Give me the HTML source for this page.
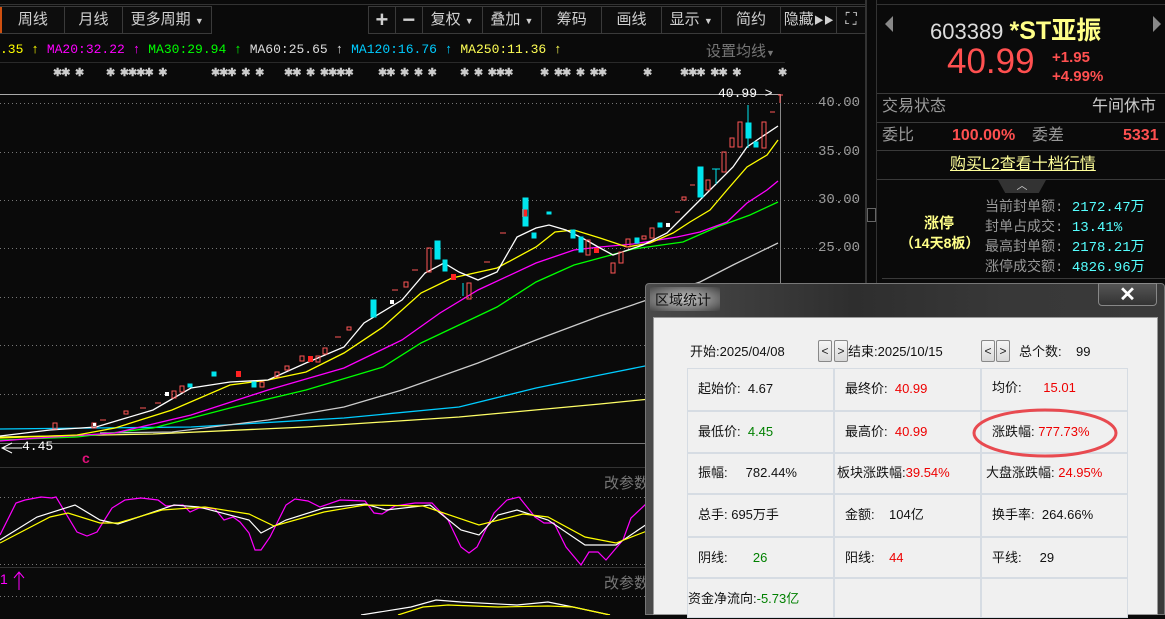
<!DOCTYPE html>
<html><head><meta charset="utf-8">
<style>
*{margin:0;padding:0;box-sizing:border-box}
body{width:1165px;height:615px;overflow:hidden;background:#0a0a0a;position:relative;font-family:"Liberation Sans","Noto Sans CJK SC",sans-serif}
.a{position:absolute;white-space:nowrap}
.tb{position:absolute;top:6px;height:28px;border:1px solid #3a3a3a;background:#0d0d0d;display:flex}
.tb div{border-right:1px solid #3a3a3a;color:#cfcfcf;font-size:15px;line-height:26px;text-align:center}
.tb div:last-child{border-right:none}
.m{font-family:"Liberation Mono","Noto Sans CJK SC",monospace}
.cell{position:absolute;background:#f0f0f0;border:1px solid #d6dce3;font-size:13px;color:#111;line-height:40px;padding-left:10px}
.r{color:#e00}.g{color:#008000}
.btn{position:absolute;width:14px;height:22px;border:1px solid #888;border-radius:2px;background:linear-gradient(#f6f6f6,#d8d8d8);font-size:12px;line-height:20px;text-align:center;color:#222}
</style></head><body>
<div class="a" style="left:0;top:4px;width:866px;height:1px;background:#333"></div>
<div class="tb" style="left:-1px;width:213px">
 <div style="width:65px;border-left:2px solid #d05010">周线</div><div style="width:59px">月线</div><div style="width:88px">更多周期 <span style="font-size:9px">▼</span></div>
</div>
<div class="tb" style="left:368px;width:498px">
 <div style="width:27px;font-size:22px;font-weight:bold">+</div><div style="width:27px;font-size:22px;font-weight:bold">−</div>
 <div style="width:60px">复权 <span style="font-size:9px">▼</span></div><div style="width:60px">叠加 <span style="font-size:9px">▼</span></div>
 <div style="width:60px">筹码</div><div style="width:60px">画线</div><div style="width:60px">显示 <span style="font-size:9px">▼</span></div>
 <div style="width:60px">简约</div><div style="width:56px">隐藏<span style="font-size:10px">▶▶</span></div><div style="width:28px;font-size:16px">⛶</div>
</div>
<div class="a m" style="left:0;top:42px;font-size:13px;color:#ff0">.35 ↑ <span style="color:#f0f">MA20:32.22 ↑</span> <span style="color:#0f0">MA30:29.94 ↑</span> <span style="color:#ddd">MA60:25.65 ↑</span> <span style="color:#0cf">MA120:16.76 ↑</span> <span style="color:#ff5">MA250:11.36 ↑</span></div>
<div class="a" style="left:706px;top:40px;font-size:15px;color:#777">设置均线<span style="font-size:9px">▼</span></div>
<div class="a" style="left:0;top:62px;width:785px;height:1px;background:#2a2a2a"></div>
<div class="a m" style="left:0;top:66px;font-size:11px;font-weight:bold;color:#ccc;letter-spacing:-1px">
<span class="a" style="left:53px">✱✱ ✱</span><span class="a" style="left:106px">✱ ✱✱✱✱ ✱</span><span class="a" style="left:211px">✱✱✱ ✱ ✱</span><span class="a" style="left:284px">✱✱ ✱ ✱✱✱✱</span><span class="a" style="left:378px">✱✱ ✱ ✱ ✱</span><span class="a" style="left:460px">✱ ✱ ✱✱✱</span><span class="a" style="left:540px">✱ ✱✱ ✱ ✱✱</span><span class="a" style="left:643px">✱</span><span class="a" style="left:680px">✱✱✱ ✱✱ ✱</span><span class="a" style="left:778px">✱</span></div>

<svg class="a" style="left:0;top:0" width="866" height="615">
<g stroke="#777" stroke-dasharray="1 3" stroke-width="1">
<line x1="0" y1="103.5" x2="860" y2="103.5"/><line x1="0" y1="152.5" x2="860" y2="152.5"/><line x1="0" y1="200.5" x2="860" y2="200.5"/><line x1="0" y1="248.5" x2="860" y2="248.5"/><line x1="0" y1="297.5" x2="780" y2="297.5"/><line x1="0" y1="345.5" x2="780" y2="345.5"/><line x1="0" y1="394.5" x2="780" y2="394.5"/><line x1="0" y1="497.5" x2="650" y2="497.5"/><line x1="0" y1="564.5" x2="650" y2="564.5"/><line x1="0" y1="596.5" x2="650" y2="596.5"/>
</g>
<line x1="0" y1="94.5" x2="780" y2="94.5" stroke="#aaa"/>
<line x1="780.5" y1="94" x2="780.5" y2="462" stroke="#888"/>
<line x1="0" y1="443.5" x2="866" y2="443.5" stroke="#777"/>
<line x1="0" y1="467.5" x2="866" y2="467.5" stroke="#333"/>
<line x1="0" y1="567.5" x2="866" y2="567.5" stroke="#333"/>
<line x1="865.5" y1="0" x2="865.5" y2="615" stroke="#333"/>
<g fill="none" stroke-width="1.3">
<polyline stroke="#ffff66" points="0,437 153,434 306,427 459,417 600,404 650,399"/>
<polyline stroke="#00ccff" points="0,429 191,427 344,418 459,407 536,388 600,375 650,365"/>
<polyline stroke="#cccccc" points="100,433 172,432 268,420 344,407 402,390 478,363 536,340 600,316 700,282 733,265 778,243"/>
<polyline stroke="#00ff00" points="0,440 77,437 153,428 230,408 306,390 383,367 421,343 459,325 497,307 536,282 574,265 600,258 633,249 683,242 717,227 750,215 778,202"/>
<polyline stroke="#ff00ff" points="0,441 38,438 115,433 191,415 268,390 344,368 402,340 440,313 478,290 536,263 574,250 600,247 633,244 677,237 700,232 727,222 747,203 767,190 778,181"/>
<polyline stroke="#ffff00" points="0,438 77,435 115,428 172,410 230,385 268,380 306,372 344,353 383,327 421,293 452,278 497,268 536,247 555,232 574,230 600,238 627,247 650,243 673,233 690,222 710,210 727,190 747,167 767,155 778,140"/>
<polyline stroke="#ffffff" points="0,436 50,430 96,427 153,410 191,388 230,382 268,380 306,363 344,347 364,323 402,300 425,273 444,263 459,272 478,280 497,272 517,237 536,228 549,225 566,230 586,240 600,248 613,255 643,245 667,233 687,213 710,190 733,167 747,147 760,138 778,126"/>
</g>
<g fill="none" stroke="#ff5555" shape-rendering="crispEdges">
<rect x="53" y="423" width="4" height="6"/><rect x="92" y="423" width="4" height="5"/><rect x="124" y="411" width="4" height="3"/><rect x="172" y="391" width="4" height="7"/><rect x="180" y="386" width="4" height="6"/><rect x="260" y="382" width="4" height="5"/><rect x="275" y="372" width="4" height="5"/><rect x="285" y="366" width="4" height="4"/><rect x="300" y="356" width="4" height="5"/><rect x="316" y="356" width="4" height="6"/><rect x="323" y="348" width="4" height="6"/><rect x="347" y="327" width="4" height="3"/><rect x="404" y="282" width="4" height="5"/><rect x="427" y="248" width="4" height="24"/><rect x="467" y="283" width="4" height="16"/><rect x="611" y="263" width="4" height="10"/><rect x="619" y="252" width="4" height="11"/><rect x="626" y="239" width="4" height="8"/><rect x="642" y="236" width="4" height="3"/><rect x="650" y="228" width="4" height="10"/><rect x="682" y="197" width="4" height="3"/><rect x="706" y="180" width="4" height="10"/><rect x="722" y="152" width="4" height="20"/><rect x="730" y="138" width="4" height="9"/><rect x="738" y="122" width="4" height="25"/><rect x="762" y="122" width="4" height="26"/><rect x="586" y="240" width="4" height="15"/>
<line x1="100" y1="420" x2="106" y2="420"/><line x1="140" y1="408" x2="146" y2="408"/><line x1="155" y1="403" x2="161" y2="403"/><line x1="335" y1="337" x2="341" y2="337"/><line x1="392" y1="290" x2="398" y2="290"/><line x1="412" y1="270" x2="418" y2="270"/><line x1="484" y1="262" x2="490" y2="262"/><line x1="500" y1="233" x2="506" y2="233"/><line x1="675" y1="212" x2="680" y2="212"/><line x1="690" y1="185" x2="695" y2="185"/><line x1="770" y1="112" x2="775" y2="112"/><line x1="780" y1="95" x2="780" y2="103"/><line x1="778" y1="95" x2="783" y2="95"/>
</g>
<g fill="#ff2222" shape-rendering="crispEdges"><rect x="236" y="371" width="5" height="6"/><rect x="308" y="356" width="5" height="6"/><rect x="451" y="274" width="5" height="6"/><rect x="594" y="248" width="5" height="5"/><rect x="522" y="209" width="5" height="8"/></g>
<g fill="#00e5ee" stroke="#00e5ee" shape-rendering="crispEdges">
<rect x="188" y="384" width="4" height="3"/><rect x="212" y="372" width="4" height="4"/><rect x="252" y="382" width="4" height="5"/><rect x="371" y="300" width="5" height="17"/><rect x="435" y="241" width="5" height="18"/><rect x="443" y="260" width="4" height="11"/><rect x="523" y="198" width="5" height="28" fill="none"/><rect x="523" y="198" width="5" height="11"/><rect x="523" y="217" width="5" height="9"/><rect x="532" y="233" width="4" height="5"/><rect x="547" y="212" width="4" height="2"/><rect x="571" y="230" width="4" height="8"/><rect x="579" y="237" width="4" height="15"/><rect x="635" y="238" width="4" height="5"/><rect x="658" y="223" width="4" height="4"/><rect x="698" y="167" width="5" height="30"/><rect x="746" y="123" width="5" height="15"/><rect x="754" y="142" width="4" height="5"/>
<line x1="716" y1="169" x2="716" y2="184"/><line x1="712" y1="169" x2="720" y2="169"/><line x1="748" y1="105" x2="748" y2="148"/><line x1="463" y1="283" x2="463" y2="296"/>
</g>
<g fill="#fff" shape-rendering="crispEdges"><rect x="165" y="392" width="4" height="4"/><rect x="666" y="223" width="4" height="4"/><rect x="93" y="423" width="3" height="3"/><rect x="390" y="300" width="4" height="4"/></g>
<g fill="none" stroke-width="1.2">
<polyline stroke="#ff00ff" points="0,535 16,503 25,500 41,497 52,498 56,497 77,532 87,536 97,532 112,508 125,500 141,498 158,500 166,506 183,505 190,512 199,508 208,508 215,509 224,520 233,517 240,522 249,533 255,550 261,550 270,537 286,505 295,499 308,501 320,507 340,500 365,501 374,513 382,514 395,506 415,503 432,503 448,520 461,547 469,553 477,547 494,513 507,500 519,497 535,517 544,523 554,523 566,547 581,565 589,552 598,552 606,560 623,540 631,518 647,503"/>
<polyline stroke="#ffffff" points="0,540 37,517 75,505 100,520 118,524 174,505 199,507 249,520 261,533 286,520 324,508 365,504 386,510 430,505 461,530 479,535 498,515 517,510 548,520 585,545 616,545 647,524"/>
<polyline stroke="#ffff00" points="0,543 50,517 68,513 100,523 118,523 162,510 205,507 249,514 274,526 324,512 365,505 423,506 479,525 523,514 548,517 585,537 616,543 647,531"/>
<polyline stroke="#ffffff" points="361,615 411,607 436,600 461,602 517,605 548,602 573,607 610,615"/>
<polyline stroke="#ffff00" points="398,615 423,607 448,605 498,607 548,606 573,607 610,615"/>
</g>
<path d="M15 15 L5 20 L15 25" stroke="#fff" fill="none" transform="translate(-3,428)"/>
<line x1="2" y1="448" x2="22" y2="448" stroke="#fff"/>
<line x1="19" y1="572" x2="19" y2="590" stroke="#f0f"/><path d="M14 578 L19 572 L24 578" stroke="#f0f" fill="none"/>
</svg>
<div class="a m" style="left:22px;top:439px;font-size:13px;color:#fff">4.45</div>
<div class="a" style="left:82px;top:450px;font-size:14px;font-weight:bold;color:#e0107a">c</div>
<div class="a" style="left:0;top:571px;font-size:14px;color:#f0f">1</div>
<div class="a m" style="left:718px;top:86px;font-size:13px;color:#fff">40.99 &gt;</div>
<div class="a" style="left:604px;top:472px;font-size:15px;color:#777">改参数</div>
<div class="a" style="left:604px;top:572px;font-size:15px;color:#777">改参数</div>
<div class="a m" style="left:818px;top:95px;font-size:14px;color:#999;line-height:16px">40.00</div>
<div class="a m" style="left:818px;top:144px;font-size:14px;color:#999;line-height:16px">35.00</div>
<div class="a m" style="left:818px;top:192px;font-size:14px;color:#999;line-height:16px">30.00</div>
<div class="a m" style="left:818px;top:240px;font-size:14px;color:#999;line-height:16px">25.00</div>
<div class="a" style="left:866px;top:0;width:11px;height:615px;background:#0a0a0a;border-left:1px solid #333;border-right:1px solid #333"></div>
<div class="a" style="left:867px;top:208px;width:9px;height:14px;border:1px solid #666"></div>
<div class="a" style="left:877px;top:4px;width:288px;height:1px;background:#333"></div>
<div class="a" style="left:885px;top:16px;width:0;height:0;border:8px solid transparent;border-right:8px solid #888;border-left:0"></div>
<div class="a" style="left:1153px;top:16px;width:0;height:0;border:8px solid transparent;border-left:8px solid #888;border-right:0"></div>
<div class="a" style="left:930px;top:11px;font-size:22px;color:#ddd">603389 <span style="color:#ffff88;font-weight:bold;font-size:25px">*ST亚振</span></div>
<div class="a" style="left:947px;top:42px;font-size:35px;color:#ff5050">40.99</div>
<div class="a" style="left:1052px;top:48px;font-size:15px;color:#ff5050;line-height:19px;font-weight:bold">+1.95<br>+4.99%</div>
<div class="a" style="left:877px;top:93px;width:288px;height:1px;background:#3a3a3a"></div>
<div class="a" style="left:882px;top:97px;font-size:16px;line-height:20px;color:#999">交易状态</div>
<div class="a" style="left:1092px;top:97px;font-size:16px;line-height:20px;color:#ccc">午间休市</div>
<div class="a" style="left:877px;top:122px;width:288px;height:1px;background:#3a3a3a"></div>
<div class="a" style="left:882px;top:126px;font-size:16px;line-height:20px;color:#999">委比</div>
<div class="a" style="left:952px;top:126px;font-size:16px;line-height:20px;color:#ff5050;font-weight:bold">100.00%</div>
<div class="a" style="left:1032px;top:126px;font-size:16px;line-height:20px;color:#999">委差</div>
<div class="a" style="left:1123px;top:126px;font-size:16px;line-height:20px;color:#ff5050;font-weight:bold">5331</div>
<div class="a" style="left:877px;top:150px;width:288px;height:1px;background:#3a3a3a"></div>
<div class="a" style="left:950px;top:155px;font-size:16px;line-height:20px;color:#ffff99;text-decoration:underline">购买L2查看十档行情</div>
<div class="a" style="left:877px;top:179px;width:288px;height:1px;background:#3a3a3a"></div>
<div class="a" style="left:998px;top:180px;width:48px;height:13px;background:#333;clip-path:polygon(0 0,100% 0,85% 100%,15% 100%);color:#ccc;font-size:11px;text-align:center;line-height:12px">︿</div>
<div class="a" style="left:924px;top:212px;font-size:15px;font-weight:bold;color:#ffff88">涨停</div>
<div class="a" style="left:900px;top:233px;font-size:14px;font-weight:bold;color:#ffff88">（14天8板）</div>
<div class="a m" style="left:985px;top:198px;font-size:14px;line-height:20px;color:#999">当前封单额: <span style="color:#5ff">2172.47万</span><br>封单占成交: <span style="color:#5ff">13.41%</span><br>最高封单额: <span style="color:#5ff">2178.21万</span><br>涨停成交额: <span style="color:#5ff">4826.96万</span></div>
<div class="a" style="left:882px;top:278px;width:283px;height:1px;background:#3a3a3a"></div>
<div class="a" style="left:645px;top:283px;width:520px;height:332px;background:linear-gradient(90deg,#4a4a4a,#2e2e2e 40%,#383838 70%,#3a3a3a);border:1px solid #777;border-radius:4px 4px 0 0"></div>
<div class="a" style="left:650px;top:287px;width:70px;height:24px;background:radial-gradient(#c8c8c8,rgba(120,120,120,0))"></div>
<div class="a" style="left:655px;top:290px;font-size:14px;color:#111">区域统计</div>
<div class="a" style="left:1098px;top:283px;width:59px;height:23px;border:1px solid #888;border-radius:0 0 4px 4px;background:linear-gradient(#555,#333);color:#fff;font-size:20px;font-weight:bold;text-align:center;line-height:22px">✕</div>
<div class="a" style="left:653px;top:317px;width:505px;height:298px;background:#f0f0f0;border:1px solid #999"></div>
<div class="a" style="left:690px;top:341px;font-size:13px;color:#111">开始:2025/04/08</div>
<div class="btn" style="left:818px;top:340px">&lt;</div><div class="btn" style="left:834px;top:340px">&gt;</div>
<div class="a" style="left:848px;top:341px;font-size:13px;color:#111">结束:2025/10/15</div>
<div class="btn" style="left:981px;top:340px">&lt;</div><div class="btn" style="left:996px;top:340px">&gt;</div>
<div class="a" style="left:1019px;top:341px;font-size:13px;color:#111">总个数:&nbsp;&nbsp;&nbsp;&nbsp;99</div>
<div class="cell" style="left:687px;top:368px;width:147px;height:43px">起始价:&nbsp; 4.67</div>
<div class="cell" style="left:834px;top:368px;width:147px;height:43px">最终价:&nbsp; <span class="r">40.99</span></div>
<div class="cell" style="left:981px;top:368px;width:147px;height:43px;line-height:38px">均价:&nbsp;&nbsp;&nbsp;&nbsp;&nbsp; <span class="r">15.01</span></div>
<div class="cell" style="left:687px;top:411px;width:147px;height:42px">最低价:&nbsp; <span class="g">4.45</span></div>
<div class="cell" style="left:834px;top:411px;width:147px;height:42px">最高价:&nbsp; <span class="r">40.99</span></div>
<div class="cell" style="left:981px;top:411px;width:147px;height:42px">涨跌幅:&nbsp;<span class="r">777.73%</span></div>
<div class="cell" style="left:687px;top:453px;width:147px;height:41px;line-height:38px">振幅:&nbsp;&nbsp;&nbsp;&nbsp; 782.44%</div>
<div class="cell" style="left:834px;top:453px;width:147px;height:41px;line-height:38px;padding-left:2px">板块涨跌幅:<span class="r">39.54%</span></div>
<div class="cell" style="left:981px;top:453px;width:147px;height:41px;line-height:38px;padding-left:4px">大盘涨跌幅: <span class="r">24.95%</span></div>
<div class="cell" style="left:687px;top:494px;width:147px;height:43px">总手: 695万手</div>
<div class="cell" style="left:834px;top:494px;width:147px;height:43px">金额:&nbsp;&nbsp;&nbsp; 104亿</div>
<div class="cell" style="left:981px;top:494px;width:147px;height:43px">换手率:&nbsp; 264.66%</div>
<div class="cell" style="left:687px;top:537px;width:147px;height:41px">阴线:&nbsp;&nbsp;&nbsp;&nbsp;&nbsp;&nbsp; <span class="g">26</span></div>
<div class="cell" style="left:834px;top:537px;width:147px;height:41px">阳线:&nbsp;&nbsp;&nbsp; <span class="r">44</span></div>
<div class="cell" style="left:981px;top:537px;width:147px;height:41px">平线:&nbsp;&nbsp;&nbsp;&nbsp; 29</div>
<div class="cell" style="left:687px;top:578px;width:147px;height:40px;padding-left:0">资金净流向:<span class="g">-5.73亿</span></div>
<div class="cell" style="left:834px;top:578px;width:147px;height:40px"></div>
<div class="cell" style="left:981px;top:578px;width:147px;height:40px"></div>
<svg class="a" style="left:965px;top:400px" width="160" height="70"><ellipse cx="80" cy="33" rx="71" ry="23" fill="none" stroke="#e84a50" stroke-width="3"/></svg>
</body></html>
